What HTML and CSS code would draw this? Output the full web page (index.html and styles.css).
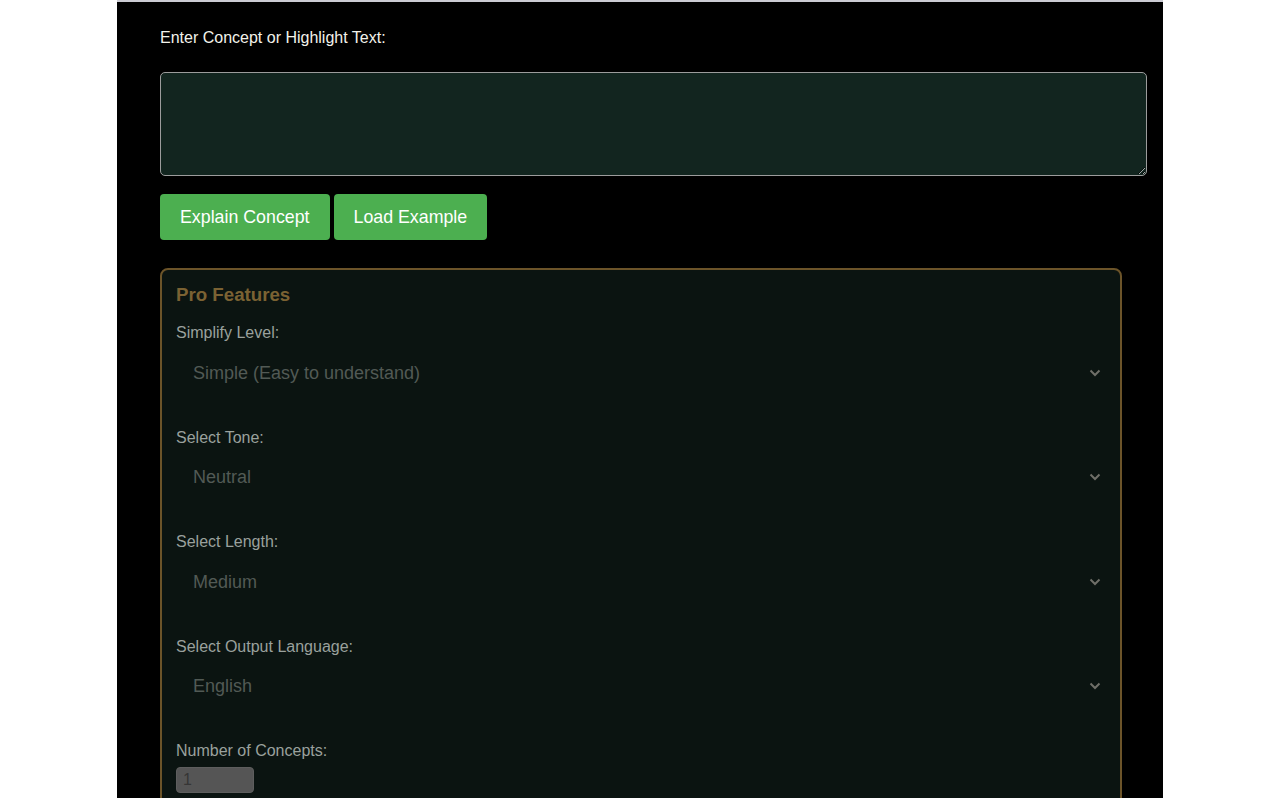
FILE: index.html
```html
<!DOCTYPE html>
<html lang="en">
<head>
  <meta charset="UTF-8">
  <meta name="viewport" content="width=device-width, initial-scale=1.0">
  <title>Concept Explainer</title>
  <link rel="stylesheet" href="styles.css">
</head>
<body>

  <div class="container">
    <label class="main-label" for="conceptInput">Enter Concept or Highlight Text:</label>
    <textarea id="conceptInput" class="concept-input"></textarea>

    <div class="actions">
      <button class="btn">Explain Concept</button>
      <button class="btn">Load Example</button>
    </div>

    <!-- Pro section, shown dimmed until unlocked -->
    <div class="pro-box">
      <h3 class="pro-title">Pro Features</h3>

      <label class="field-label">Simplify Level:</label>
      <div class="select-wrap">
        <select class="pro-select" disabled>
          <option>Simple (Easy to understand)</option>
        </select>
        <svg class="chevron" width="12" height="8" viewBox="0 0 12 8"><path d="M1.5 1.5 L6 6 L10.5 1.5" fill="none" stroke="#6f6f68" stroke-width="2"/></svg>
      </div>

      <label class="field-label">Select Tone:</label>
      <div class="select-wrap">
        <select class="pro-select" disabled>
          <option>Neutral</option>
        </select>
        <svg class="chevron" width="12" height="8" viewBox="0 0 12 8"><path d="M1.5 1.5 L6 6 L10.5 1.5" fill="none" stroke="#6f6f68" stroke-width="2"/></svg>
      </div>

      <label class="field-label">Select Length:</label>
      <div class="select-wrap">
        <select class="pro-select" disabled>
          <option>Medium</option>
        </select>
        <svg class="chevron" width="12" height="8" viewBox="0 0 12 8"><path d="M1.5 1.5 L6 6 L10.5 1.5" fill="none" stroke="#6f6f68" stroke-width="2"/></svg>
      </div>

      <label class="field-label">Select Output Language:</label>
      <div class="select-wrap">
        <select class="pro-select" disabled>
          <option>English</option>
        </select>
        <svg class="chevron" width="12" height="8" viewBox="0 0 12 8"><path d="M1.5 1.5 L6 6 L10.5 1.5" fill="none" stroke="#6f6f68" stroke-width="2"/></svg>
      </div>

      <label class="field-label">Number of Concepts:</label>
      <input class="num-input" type="text" value="1" disabled>
    </div>
  </div>

</body>
</html>
```

FILE: styles.css
```css
body {
  margin: 0;
  padding: 0;
  background-color: #ffffff;
  font-family: "Liberation Sans", Arial, sans-serif;
  overflow: hidden;
}
.container {
  width: 1046px;
  height: 798px;
  margin: 0 auto;
  box-sizing: border-box;
  padding: 27px 16px 0 43px;
  background-color: #000000;
  border-top: 2px solid #cbcbd3;
}
.main-label {
  display: block;
  font-size: 16px;
  line-height: 18px;
  color: #f2f2ea;
  margin-bottom: 25px;
}
.concept-input {
  display: block;
  width: 100%;
  height: 104px;
  box-sizing: border-box;
  background-color: #12251f;
  border: 1px solid #9c9c9c;
  border-radius: 5px;
  color: #eeeeee;
  font-family: "Liberation Sans", Arial, sans-serif;
  font-size: 14px;
  padding: 8px;
  margin: 0;
}
.actions {
  display: flex;
  gap: 4px;
  margin-top: 18px;
}
.btn {
  font-family: "Liberation Sans", Arial, sans-serif;
  font-size: 17.8px;
  height: 46px;
  padding: 0 20px;
  background-color: #4caf50;
  color: #ffffff;
  border: none;
  border-radius: 4px;
  cursor: pointer;
}
.pro-box {
  width: 962px;
  box-sizing: border-box;
  margin-top: 28px;
  padding: 14px 14px 20px;
  background-color: #0b1411;
  border: 2px solid #6c5429;
  border-radius: 8px;
  height: 560px;
}
.pro-title {
  margin: 0 0 19px;
  font-size: 18.7px;
  line-height: 22px;
  color: #7b6233;
}
.field-label {
  display: block;
  font-size: 16px;
  line-height: 16px;
  color: #9aa19d;
  margin-bottom: 8px;
}
.select-wrap {
  display: flex;
  align-items: center;
  height: 47px;
  padding: 0 5px 0 17px;
  margin-bottom: 33.5px;
}
.pro-select {
  flex: 1;
  appearance: none;
  -webkit-appearance: none;
  background: transparent;
  border: none;
  padding: 0;
  font-family: "Liberation Sans", Arial, sans-serif;
  font-size: 18px;
  color: #525a55;
  opacity: 1;
}
.chevron {
  display: block;
}
.num-input {
  display: block;
  width: 78px;
  height: 26px;
  box-sizing: border-box;
  margin-top: 3px;
  padding: 0 6px;
  background-color: #555555;
  border: 1px solid #5e5e5e;
  border-radius: 4px;
  font-family: "Liberation Sans", Arial, sans-serif;
  font-size: 16px;
  color: #363636;
}
```
